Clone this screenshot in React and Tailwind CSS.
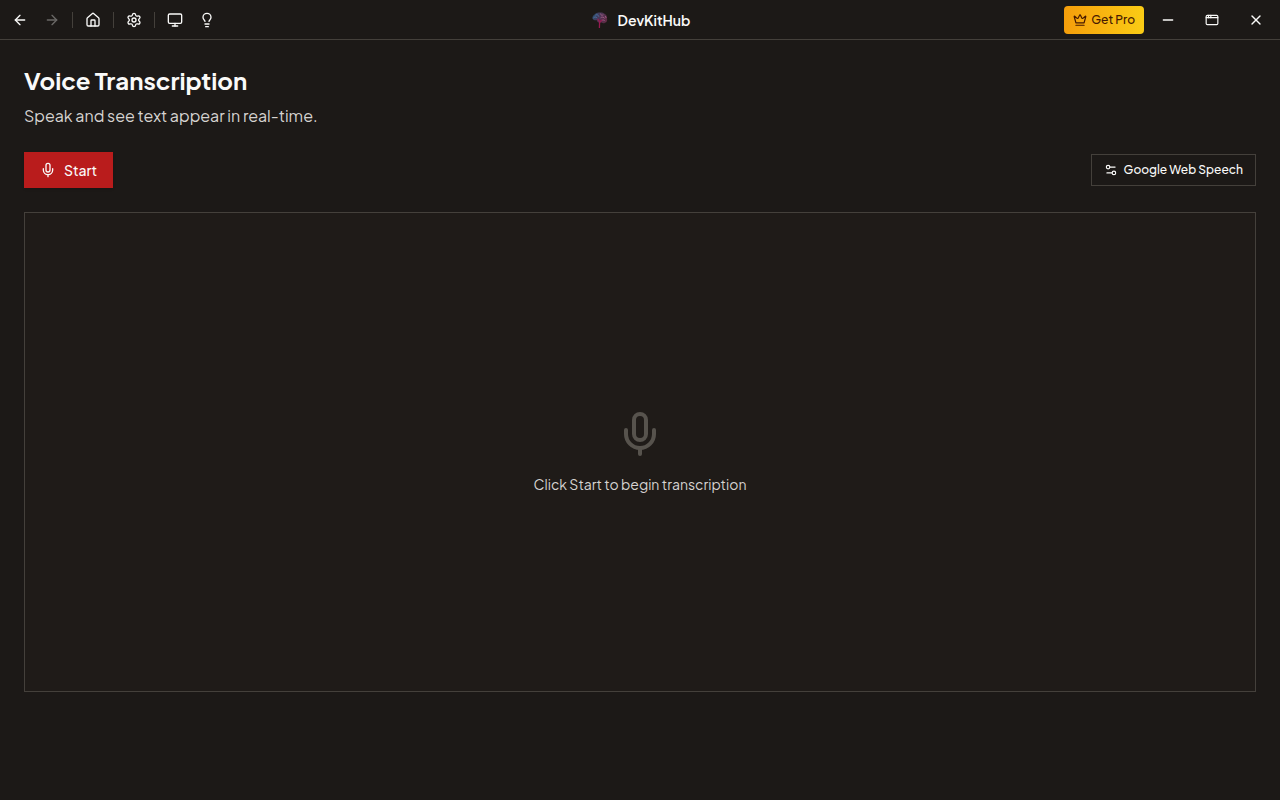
import React from 'react';
import {
  AppWindow,
  ArrowLeft,
  ArrowRight,
  Crown,
  House,
  Lightbulb,
  Mic,
  Minus,
  Monitor,
  Settings,
  Settings2,
  X,
} from 'lucide-react';

function Logo() {
  return (
    <svg className="w-4 h-4" viewBox="0 0 16 16" fill="none" aria-hidden="true">
      <defs>
        <linearGradient id="brain" x1="1" y1="3" x2="14" y2="10" gradientUnits="userSpaceOnUse">
          <stop offset="0" stopColor="#3a6ea5" />
          <stop offset="0.45" stopColor="#6b4a80" />
          <stop offset="1" stopColor="#8a3560" />
        </linearGradient>
      </defs>
      <path
        d="M0.4 6.5C0.3 4.6 1.4 3 2.9 2.3C4 0.8 6 0.1 7.8 0.5C9.8 0.1 11.8 0.8 12.8 2.1C14.4 2.8 15.3 4.6 15 6.4C15.6 8.2 14.8 10.2 13 10.7C11.8 11.6 10.5 11.2 9.6 10.6L6.4 10.4C5.4 10 5 9.2 5 8.2C3.9 8.6 1.1 8.2 0.4 6.5Z"
        fill="url(#brain)"
        fillOpacity="0.6"
      />
      <path
        d="M1.4 6C2.6 4.6 4.2 4.8 5.2 6M3.4 3.2C4.8 2.2 6.4 3 6.8 4.6"
        stroke="#4a86bd"
        strokeWidth="0.7"
      />
      <path
        d="M8.5 1.6C8.8 3.4 10 3.6 11.4 2.8M8.6 5.8C10 4.6 12 5 12.8 6.6M13.2 4L14.2 6M9.6 8.6C11 7.6 12.2 8 13 9.2"
        stroke="#b56a94"
        strokeWidth="0.7"
      />
      <path d="M5.8 7L7.6 10L7.4 16M7.6 10.5L10 7.8" stroke="#961a50" strokeWidth="1.3" />
    </svg>
  );
}

function BarButton({ label, icon: Icon, className = 'w-8', iconClassName = 'w-4 h-4', ...props }) {
  return (
    <button
      type="button"
      aria-label={label}
      className={`${className} h-8 flex items-center justify-center text-stone-50 disabled:opacity-35`}
      {...props}
    >
      <Icon className={iconClassName} />
    </button>
  );
}

function Divider() {
  return <div className="w-px h-4 mx-1 bg-stone-700" />;
}

function TitleBar() {
  return (
    <header className="h-10 shrink-0 flex items-center border-b border-stone-700">
      <nav className="flex-1 flex items-center pl-1">
        <BarButton label="Back" icon={ArrowLeft} />
        <BarButton label="Forward" icon={ArrowRight} disabled />
        <Divider />
        <BarButton label="Home" icon={House} />
        <Divider />
        <BarButton label="Settings" icon={Settings} />
        <Divider />
        <BarButton label="Display" icon={Monitor} />
        <BarButton label="Tips" icon={Lightbulb} />
      </nav>

      <div className="flex items-center gap-2.5 text-stone-50">
        <Logo />
        <span className="text-sm font-semibold">DevKitHub</span>
      </div>

      <div className="flex-1 flex items-center justify-end pr-0.5">
        <button
          type="button"
          className="h-7 px-[9px] mr-0.5 flex items-center gap-1 rounded-sm bg-linear-to-r from-[#f59e0b] to-[#facc15] text-xs font-medium text-amber-950"
        >
          <Crown className="w-3.5 h-3.5" />
          Get Pro
        </button>
        <BarButton label="Minimize" icon={Minus} className="w-11" />
        <BarButton label="Maximize" icon={AppWindow} className="w-11" iconClassName="w-3.5 h-3.5" />
        <BarButton label="Close" icon={X} className="w-11" />
      </div>
    </header>
  );
}

export default function App() {
  return (
    <div className="min-h-screen flex flex-col bg-[#1c1917] font-['Plus_Jakarta_Sans',Inter,sans-serif] text-stone-50">
      <TitleBar />

      <main className="flex-1 p-6">
        <h1 className="text-2xl font-bold">Voice Transcription</h1>
        <p className="mt-2 text-base text-stone-300">Speak and see text appear in real-time.</p>

        <div className="mt-6 flex items-center justify-between">
          <button
            type="button"
            className="h-9 px-4 flex items-center gap-2 bg-[#b91c1c] text-sm font-medium shadow-sm"
          >
            <Mic className="w-4 h-4" />
            Start
          </button>
          <button
            type="button"
            className="h-8 px-3 flex items-center gap-1.5 border border-stone-700 text-xs font-medium"
          >
            <Settings2 className="w-3.5 h-3.5" />
            Google Web Speech
          </button>
        </div>

        <section className="mt-6 h-[60vh] flex flex-col items-center justify-center border border-stone-700 bg-[#1f1b18]">
          <Mic className="w-12 h-12 mb-4 text-stone-600" />
          <p className="text-sm text-stone-300">Click Start to begin transcription</p>
        </section>
      </main>
    </div>
  );
}
